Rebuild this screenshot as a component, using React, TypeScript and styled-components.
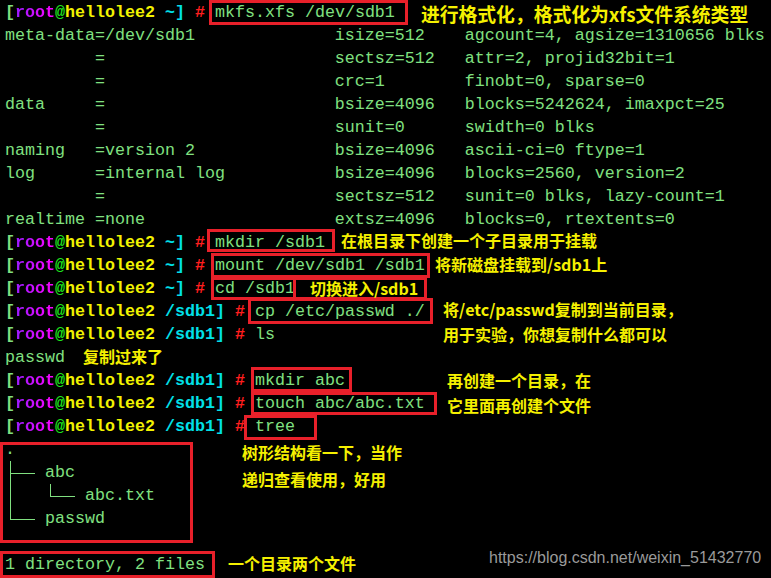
import React from 'react';
import styled, { createGlobalStyle } from 'styled-components';

const Global = createGlobalStyle`
  html, body { margin: 0; padding: 0; background: #000; }
`;

const Screen = styled.div`
  position: relative;
  width: 771px;
  height: 578px;
  overflow: hidden;
  background: #000;
  box-sizing: border-box;
  padding: 1px 0 0 5px;
  font-family: "Liberation Mono", "DejaVu Sans Mono", monospace;
  font-size: 16.66px;
  line-height: 23px;
  color: #80e080;
`;

const Line = styled.div`
  height: 23px;
  white-space: pre;
`;

const PromptWrap = styled.span`
  font-weight: bold;
`;
const Bracket = styled.span` color: #80e080; `;
const User = styled.span`
  background: linear-gradient(90deg, #9a1cff 0%, #ff00ff 100%);
  -webkit-background-clip: text;
  background-clip: text;
  color: transparent;
`;
const At = styled.span` color: #1ee61e; `;
const Host = styled.span` color: #f2f200; `;
const Path = styled.span` color: #00e0e8; `;
const Hash = styled.span` color: #ff1e1e; `;

const Prompt: React.FC<{ path: string }> = ({ path }) => (
  <PromptWrap>
    <Bracket>[</Bracket>
    <User>root</User>
    <At>@</At>
    <Host>hellolee2</Host> <Path>{path}]</Path> <Hash>#</Hash>
  </PromptWrap>
);

type BranchKind = 'tee' | 'pipe' | 'elbow';

const Branch = styled.span<{ $kind: BranchKind }>`
  position: relative;
  display: inline-block;
  width: 40px;
  height: 23px;
  vertical-align: top;
  &::before {
    content: '';
    position: absolute;
    left: 5px;
    top: 0;
    width: 1px;
    height: ${(p) => (p.$kind === 'elbow' ? '13px' : '23px')};
    background: #80e080;
  }
  &::after {
    content: ${(p) => (p.$kind === 'pipe' ? 'none' : "''")};
    position: absolute;
    left: 5px;
    top: 12px;
    width: 25px;
    height: 1px;
    background: #80e080;
  }
`;

const Mark = styled.div<{ $x: number; $y: number; $w: number; $h: number }>`
  position: absolute;
  left: ${(p) => p.$x}px;
  top: ${(p) => p.$y}px;
  width: ${(p) => p.$w}px;
  height: ${(p) => p.$h}px;
  box-sizing: border-box;
  border: 3px solid #e8202a;
  pointer-events: none;
`;

const Note = styled.div<{ $x: number; $y: number; $size: number }>`
  position: absolute;
  left: ${(p) => p.$x}px;
  top: ${(p) => p.$y}px;
  font-family: "Noto Sans CJK SC", "Noto Sans", sans-serif;
  font-weight: bold;
  font-size: ${(p) => p.$size}px;
  line-height: 20px;
  color: #f5f000;
  white-space: nowrap;
`;

const Watermark = styled.div`
  position: absolute;
  left: 489px;
  top: 549px;
  font-family: "Liberation Sans", Arial, sans-serif;
  font-size: 16px;
  line-height: 18px;
  color: #9a9a9a;
  white-space: nowrap;
`;

const xfsLines = [
  'meta-data=/dev/sdb1              isize=512    agcount=4, agsize=1310656 blks',
  '         =                       sectsz=512   attr=2, projid32bit=1',
  '         =                       crc=1        finobt=0, sparse=0',
  'data     =                       bsize=4096   blocks=5242624, imaxpct=25',
  '         =                       sunit=0      swidth=0 blks',
  'naming   =version 2              bsize=4096   ascii-ci=0 ftype=1',
  'log      =internal log           bsize=4096   blocks=2560, version=2',
  '         =                       sectsz=512   sunit=0 blks, lazy-count=1',
  'realtime =none                   extsz=4096   blocks=0, rtextents=0',
];

const marks: [number, number, number, number][] = [
  [209, 0, 408, 25],
  [207, 229, 335, 252],
  [211, 253, 430, 278],
  [211, 277, 296, 300],
  [293, 277, 427, 300],
  [248, 298, 433, 324],
  [251, 367, 352, 392],
  [251, 392, 437, 415],
  [244, 415, 317, 440],
  [0, 442, 193, 543],
  [0, 551, 215, 578],
];

const notes: [number, number, string, number][] = [
  [421, 15, '进行格式化，格式化为xfs文件系统类型', 18.8],
  [341, 241, '在根目录下创建一个子目录用于挂载', 16],
  [435, 265, '将新磁盘挂载到/sdb1上', 16],
  [310, 289, '切换进入/sdb1', 16],
  [443, 310, '将/etc/passwd复制到当前目录，', 16],
  [443, 335, '用于实验，你想复制什么都可以', 16],
  [83, 357, '复制过来了', 16],
  [447, 381, '再创建一个目录，在', 16],
  [447, 406, '它里面再创建个文件', 16],
  [242, 453, '树形结构看一下，当作', 16],
  [242, 480, '递归查看使用，好用', 16],
  [228, 564, '一个目录两个文件', 16],
];

export default function App() {
  return (
    <>
      <Global />
      <Screen>
        <Line><Prompt path="~" /> mkfs.xfs /dev/sdb1</Line>
        {xfsLines.map((l, i) => (
          <Line key={i}>{l}</Line>
        ))}
        <Line><Prompt path="~" /> mkdir /sdb1</Line>
        <Line><Prompt path="~" /> mount /dev/sdb1 /sdb1</Line>
        <Line><Prompt path="~" /> cd /sdb1</Line>
        <Line><Prompt path="/sdb1" /> cp /etc/passwd ./</Line>
        <Line><Prompt path="/sdb1" /> ls</Line>
        <Line>passwd</Line>
        <Line><Prompt path="/sdb1" /> mkdir abc</Line>
        <Line><Prompt path="/sdb1" /> touch abc/abc.txt</Line>
        <Line><Prompt path="/sdb1" /> tree</Line>
        <Line>.</Line>
        <Line><Branch $kind="tee" />abc</Line>
        <Line><Branch $kind="pipe" /><Branch $kind="elbow" />abc.txt</Line>
        <Line><Branch $kind="elbow" />passwd</Line>
        <Line> </Line>
        <Line>1 directory, 2 files</Line>

        {marks.map(([x1, y1, x2, y2], i) => (
          <Mark key={i} $x={x1} $y={y1} $w={x2 - x1} $h={y2 - y1} />
        ))}
        {notes.map(([x, cy, t, s], i) => (
          <Note key={i} $x={x} $y={cy - 11} $size={s}>{t}</Note>
        ))}
        <Watermark>https://blog.csdn.net/weixin_51432770</Watermark>
      </Screen>
    </>
  );
}
